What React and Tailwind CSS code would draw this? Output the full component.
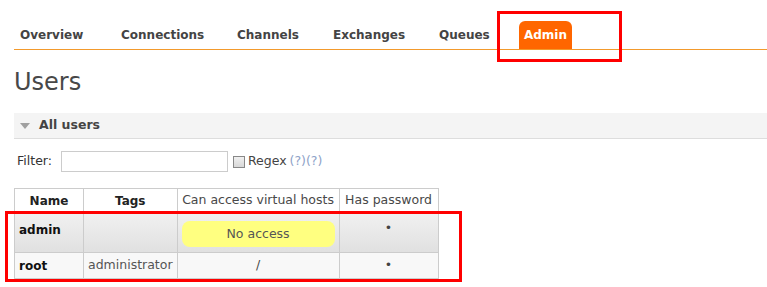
export default function App() {
  const navItems = [
    ["Overview", "w-[101px]"],
    ["Connections", "w-[116px]"],
    ["Channels", "w-[96px]"],
    ["Exchanges", "w-[106px]"],
    ["Queues", "w-[86px]"],
  ];
  return (
    <div className="relative w-[767px] h-[287px] overflow-hidden bg-white text-[#484848]" style={{ fontFamily: '"DejaVu Sans", Verdana, sans-serif' }}>
      <div className="pt-[21px] pl-[14px]">
        <div className="flex items-end border-b border-[#f39a2c] h-[29px]">
          {navItems.map(([n, w]) => (
            <div key={n} className={`${w} px-[6px] h-[28px] flex items-center text-[12px] font-bold text-[#444] whitespace-nowrap`}>{n}</div>
          ))}
          <div className="w-[53px] h-[28px] flex items-center justify-center text-[12px] font-bold text-white bg-[#ff6600] rounded-t-[6px]">Admin</div>
        </div>
      </div>

      <h1 className="ml-[14px] mt-[19px] text-[24px] leading-[26px] font-normal text-[#484848]">Users</h1>

      <div className="ml-[14px] mt-[18px] h-[26px] bg-[#f4f4f4] border-b border-[#dddddd] flex items-center">
        <svg width="10" height="6" viewBox="0 0 10 6" className="ml-[6px]">
          <polygon points="0,0 10,0 5,6" fill="#a0a0a0" />
        </svg>
        <span className="ml-[9px] text-[12.5px] font-bold text-[#444]">All users</span>
      </div>

      <div className="ml-[17px] mt-[12px] flex items-center text-[12.5px] text-[#333]">
        <span>Filter:</span>
        <div className="ml-[9px] w-[167px] h-[21px] border border-[#cccccc] bg-white"></div>
        <div className="ml-[5px] w-[12px] h-[12px] border border-[#888] bg-gradient-to-b from-[#f0f0f0] to-[#d8d8d8]"></div>
        <span className="ml-[3px] text-[#444]">Regex</span>
        <span className="ml-[3px] text-[#8ea2c8]">(?)(?)</span>
      </div>

      <table className="ml-[14px] mt-[16px] border-collapse text-[12.5px] text-[#484848]">
        <thead>
          <tr className="h-[24px] bg-white">
            <th className="w-[69px] border border-[#cccccc] font-bold text-[12px] text-[#222]">Name</th>
            <th className="w-[93px] border border-[#cccccc] font-bold text-[12px] text-[#222]">Tags</th>
            <th className="w-[162px] border border-[#cccccc] font-normal whitespace-nowrap">Can access virtual hosts</th>
            <th className="w-[99px] border border-[#cccccc] font-normal whitespace-nowrap">Has password</th>
          </tr>
        </thead>
        <tbody>
          <tr className="h-[40px] bg-gradient-to-b from-[#f1f1f1] to-[#e0e0e0]">
            <td className="border border-[#cccccc] align-top pt-[8px] px-[4px] font-bold text-[12px] text-[#111]">admin</td>
            <td className="border border-[#cccccc]"></td>
            <td className="border border-[#cccccc] px-[4px] pt-[3px]">
              <div className="h-[26px] rounded-[8px] bg-[#ffff80] flex items-center justify-center text-[#555]">No access</div>
            </td>
            <td className="border border-[#cccccc] align-top pt-[6px] text-center text-[#444]">•</td>
          </tr>
          <tr className="h-[26px] bg-[#f8f8f8]">
            <td className="border border-[#cccccc] px-[4px] font-bold text-[12px] text-[#111]">root</td>
            <td className="border border-[#cccccc] px-[4px] text-[#555]">administrator</td>
            <td className="border border-[#cccccc] text-center">/</td>
            <td className="border border-[#cccccc] text-center text-[#444]">•</td>
          </tr>
        </tbody>
      </table>

      <div className="absolute left-[497px] top-[11px] w-[125px] h-[51px] border-[3px] border-[#ff0000]"></div>
      <div className="absolute left-[5px] top-[211px] w-[457px] h-[71px] border-[3px] border-[#ff0000]"></div>
    </div>
  );
}
